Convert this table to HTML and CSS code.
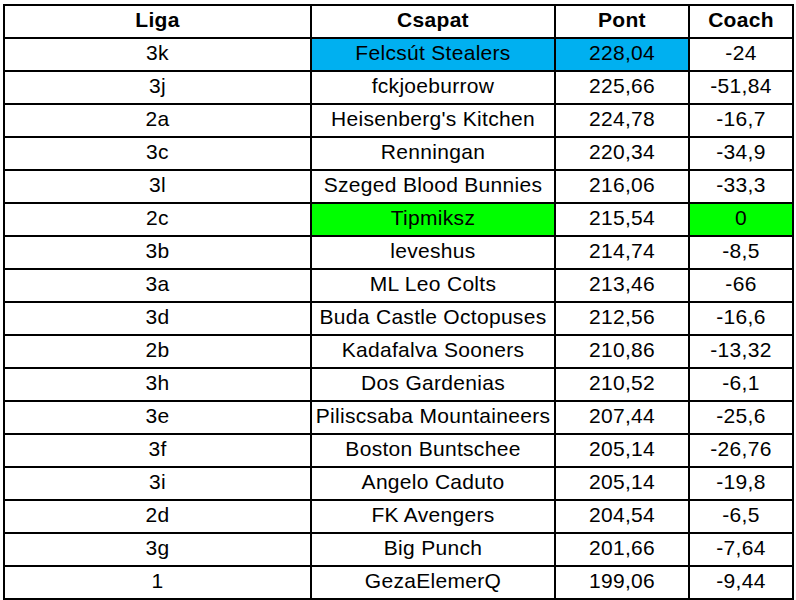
FILE: index.html
```html
<!DOCTYPE html>
<html lang="hu">
<head>
<meta charset="utf-8">
<title>Liga tabella</title>
<link rel="stylesheet" href="styles.css">
</head>
<body>
<table class="sheet">
  <thead>
    <tr>
      <th class="c-liga">Liga</th>
      <th class="c-csapat">Csapat</th>
      <th class="c-pont">Pont</th>
      <th class="c-coach">Coach</th>
    </tr>
  </thead>
  <tbody>
    <tr><td>3k</td><td class="blue">Felcsút Stealers</td><td class="blue">228,04</td><td>-24</td></tr>
    <tr><td>3j</td><td>fckjoeburrow</td><td>225,66</td><td>-51,84</td></tr>
    <tr><td>2a</td><td>Heisenberg's Kitchen</td><td>224,78</td><td>-16,7</td></tr>
    <tr><td>3c</td><td>Renningan</td><td>220,34</td><td>-34,9</td></tr>
    <tr><td>3l</td><td>Szeged Blood Bunnies</td><td>216,06</td><td>-33,3</td></tr>
    <tr><td>2c</td><td class="green">Tipmiksz</td><td>215,54</td><td class="green">0</td></tr>
    <tr><td>3b</td><td>leveshus</td><td>214,74</td><td>-8,5</td></tr>
    <tr><td>3a</td><td>ML Leo Colts</td><td>213,46</td><td>-66</td></tr>
    <tr><td>3d</td><td>Buda Castle Octopuses</td><td>212,56</td><td>-16,6</td></tr>
    <tr><td>2b</td><td>Kadafalva Sooners</td><td>210,86</td><td>-13,32</td></tr>
    <tr><td>3h</td><td>Dos Gardenias</td><td>210,52</td><td>-6,1</td></tr>
    <tr><td>3e</td><td>Piliscsaba Mountaineers</td><td>207,44</td><td>-25,6</td></tr>
    <tr><td>3f</td><td>Boston Buntschee</td><td>205,14</td><td>-26,76</td></tr>
    <tr><td>3i</td><td>Angelo Caduto</td><td>205,14</td><td>-19,8</td></tr>
    <tr><td>2d</td><td>FK Avengers</td><td>204,54</td><td>-6,5</td></tr>
    <tr><td>3g</td><td>Big Punch</td><td>201,66</td><td>-7,64</td></tr>
    <tr><td>1</td><td>GezaElemerQ</td><td>199,06</td><td>-9,44</td></tr>
  </tbody>
</table>
</body>
</html>
```
FILE: styles.css
```css
html, body {
  margin: 0;
  padding: 0;
  background: #ffffff;
}
body {
  padding: 4px 0 0 3px;
  font-family: "Liberation Sans", Arial, sans-serif;
  color: #000000;
}
.sheet {
  table-layout: fixed;
  width: 791px;
  border-collapse: separate;
  border-spacing: 0;
  border-left: 2px solid #000;
  border-top: 2px solid #000;
}
.sheet th,
.sheet td {
  box-sizing: border-box;
  height: 33px;
  padding: 0 0 3px 0;
  border-right: 2px solid #000;
  border-bottom: 2px solid #000;
  text-align: center;
  vertical-align: middle;
  font-size: 21px;
  letter-spacing: 0.3px;
  line-height: 28px;
  white-space: nowrap;
  overflow: hidden;
}
.sheet th {
  font-weight: bold;
}
.c-liga { width: 307px; }
.c-csapat { width: 244px; }
.c-pont { width: 134px; }
.c-coach { width: 104px; }
.blue { background: #00b0f0; }
.green { background: #00ff00; }
```
